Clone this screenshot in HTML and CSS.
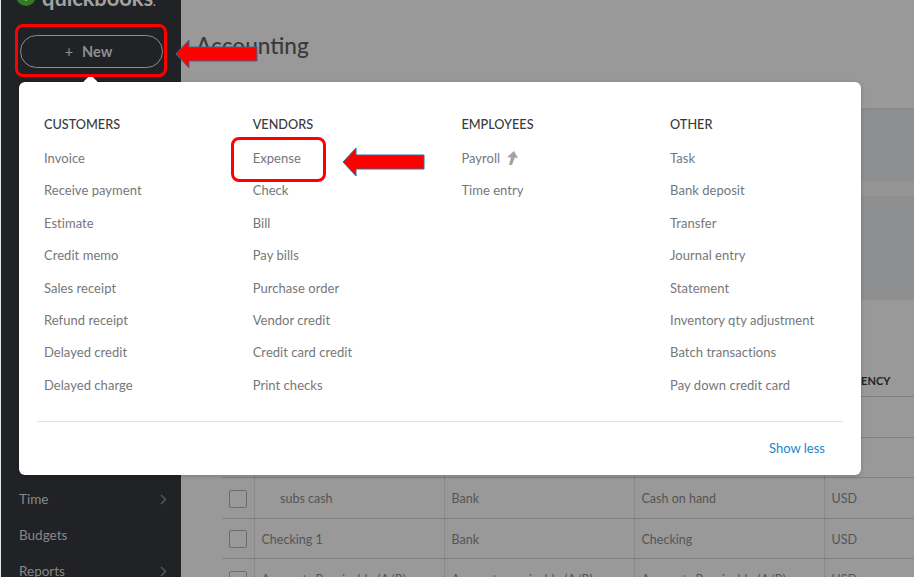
FILE: index.html
```html
<!DOCTYPE html>
<html lang="en">
<head>
<meta charset="utf-8">
<title>Accounting</title>
<link rel="stylesheet" href="styles.css">
</head>
<body>
<div class="app">
  <aside class="sidebar">
    <div class="logo">
      <svg class="logo-mark" width="20" height="20" viewBox="0 0 20 20"><circle cx="10" cy="10" r="10" fill="#2f7d1e"/><path d="M10 6v9" stroke="#9a9a9a" stroke-width="2"/></svg>
      <span class="logo-text">quickbooks<span class="logo-dot">.</span></span>
    </div>
    <button class="new-btn"><span class="plus">+</span><span>New</span></button>
    <nav class="side-nav">
      <div class="side-item"><span>Time</span><svg width="7" height="11" viewBox="0 0 7 11"><path d="M1 1l4.500 4.500L1 10" fill="none" stroke="#55565a" stroke-width="1.500"/></svg></div>
      <div class="side-item"><span>Budgets</span></div>
      <div class="side-item"><span>Reports</span><svg width="7" height="11" viewBox="0 0 7 11"><path d="M1 1l4.500 4.500L1 10" fill="none" stroke="#55565a" stroke-width="1.500"/></svg></div>
    </nav>
  </aside>
  <main class="main">
    <header class="page-head"><h1>Accounting</h1></header>
    <div class="band band-a"></div>
    <div class="band band-b"></div>
    <div class="band band-c"></div>
    <div class="table-wrap">
      <div class="row head-row"><div class="cell chk"></div><div class="cell"></div><div class="cell"></div><div class="cell"></div><div class="cell cur">CURRENCY</div></div>
      <div class="row"><div class="cell chk"></div><div class="cell"></div><div class="cell"></div><div class="cell"></div><div class="cell"></div></div>
      <div class="row"><div class="cell chk"></div><div class="cell"></div><div class="cell"></div><div class="cell"></div><div class="cell"></div></div>
      <div class="row"><div class="cell chk"><span class="box"></span></div><div class="cell sub">subs cash</div><div class="cell">Bank</div><div class="cell">Cash on hand</div><div class="cell">USD</div></div>
      <div class="row"><div class="cell chk"><span class="box"></span></div><div class="cell">Checking 1</div><div class="cell">Bank</div><div class="cell">Checking</div><div class="cell">USD</div></div>
      <div class="row"><div class="cell chk"><span class="box"></span></div><div class="cell">Accounts Receivable (A/R)</div><div class="cell">Accounts receivable (A/R)</div><div class="cell">Accounts Receivable (A/R)</div><div class="cell">USD</div></div>
    </div>
  </main>
</div>

<section class="popover">
  <span class="caret"></span>
  <div class="columns">
    <div class="col">
      <h2>CUSTOMERS</h2>
      <a>Invoice</a><a>Receive payment</a><a>Estimate</a><a>Credit memo</a><a>Sales receipt</a><a>Refund receipt</a><a>Delayed credit</a><a>Delayed charge</a>
    </div>
    <div class="col">
      <h2>VENDORS</h2>
      <a>Expense</a><a>Check</a><a>Bill</a><a>Pay bills</a><a>Purchase order</a><a>Vendor credit</a><a>Credit card credit</a><a>Print checks</a>
    </div>
    <div class="col">
      <h2>EMPLOYEES</h2>
      <a>Payroll <svg class="up" width="14" height="16" viewBox="0 0 14 16"><path d="M10 1L14 8L10.800 7.500L8 15H5L7 7.500L3 7z" fill="#a3a3a3"/></svg></a><a>Time entry</a>
    </div>
    <div class="col">
      <h2>OTHER</h2>
      <a>Task</a><a>Bank deposit</a><a>Transfer</a><a>Journal entry</a><a>Statement</a><a>Inventory qty adjustment</a><a>Batch transactions</a><a>Pay down credit card</a>
    </div>
  </div>
  <div class="foot"><a class="less">Show less</a></div>
</section>

<div class="mark mark-new"></div>
<div class="mark mark-expense"></div>
<svg class="arrow arrow-new" width="84" height="30" viewBox="0 0 84 30"><path d="M1 15L14 1V8H82V22H14V29Z" fill="#ff0000" stroke="#2f6f9f" stroke-width="1"/></svg>
<svg class="arrow arrow-expense" width="84" height="30" viewBox="0 0 84 30"><path d="M1 15L14 1V8H82V22H14V29Z" fill="#ff0000" stroke="#2f6f9f" stroke-width="1"/></svg>
</body>
</html>
```
FILE: styles.css
```css
* { box-sizing: border-box; }
html, body { margin: 0; height: 100%; overflow: hidden; }
body { font-family: "Lato", "Open Sans", sans-serif; background: #999; color: #3c3c3c; }

.app { display: flex; height: 577px; }

.sidebar { width: 181px; flex: none; background: #212225; border-left: 1px solid #e8e8e8; color: #8f9092; display: flex; flex-direction: column; overflow: hidden; }
.logo { height: 35px; display: flex; align-items: flex-start; gap: 6px; padding-left: 15px; margin-top: -14px; flex: none; }
.logo-mark { flex: none; }
.logo-text { font: 700 22px/26px "Lato", sans-serif; color: #a2a2a3; letter-spacing: -.1px; margin-top: -1px; }
.logo-dot { font-size: 11px; }
.new-btn { flex: none; margin: 14px 0 0 19px; width: 143px; height: 33px; border-radius: 17px; border: 1.500px solid #8d8d8d; background: #212225; color: #8f8f90; font: 700 14.500px "Lato", sans-serif; display: flex; align-items: center; justify-content: center; gap: 9px; padding: 0 6px 1px 0; }
.plus { font-weight: 400; }
.side-nav { margin-top: 413px; display: flex; flex-direction: column; }
.side-item { height: 36px; display: flex; align-items: center; justify-content: space-between; padding: 0 14px 0 18px; font-size: 13.500px; color: #87888a; flex: none; }

.main { flex: 1; min-width: 0; background: #999; display: flex; flex-direction: column; }
.page-head { height: 110px; flex: none; border-bottom: 2px solid #8b8b8b; padding: 32px 0 0 15px; }
.page-head h1 { margin: 0; font: 500 22.600px/28px "Lato", sans-serif; color: #3a3a3a; }
.band { flex: none; margin-left: 41px; }
.band-a { height: 72px; background: #8e8f91; }
.band-b { height: 14px; background: #959595; }
.band-c { height: 104px; background: #8e8f91; }

.table-wrap { margin: 60px 0 0 41px; flex: none; }
.row { display: grid; grid-template-columns: 33px 190px 190px 190px 1fr; height: 40.500px; border-bottom: 1px solid #808080; font-size: 12.500px; color: #555; flex: none; }
.head-row { height: 37px; font-weight: 700; font-size: 11px; color: #1f1f1f; }
.cell { display: flex; align-items: center; padding: 2px 0 0 6.500px; border-right: 1px dotted #7c7c7c; white-space: nowrap; overflow: hidden; min-width: 0; }
.chk { padding-left: 7px; }
.cell:last-child { border-right: 0; padding-left: 6.500px; }
.cell.sub { padding-left: 25px; }
.cell.cur { color: #1f1f1f; padding-top: 4px; }
.box { width: 18px; height: 18px; border: 1px solid #6c6c6c; border-radius: 2px; display: block; }

.popover { position: absolute; left: 19px; top: 82px; width: 842px; height: 393px; background: #fff; border-radius: 6px; box-shadow: 0 1px 4px rgba(0,0,0,.2); padding: 0 18px 0 18px; display: flex; flex-direction: column; }
.caret { position: absolute; left: 66px; top: -5px; width: 11px; height: 11px; background: #fff; transform: rotate(45deg); border-radius: 2px; }
.columns { display: grid; grid-template-columns: 208.700px 208.700px 208.700px 1fr; padding: 33px 0 0 7px; height: 339px; }
.col { display: flex; flex-direction: column; align-items: flex-start; }
.col h2 { margin: 0; height: 19px; font: 500 12.700px/19px "Lato", sans-serif; color: #393a3d; }
.col a { height: 32.430px; font-size: 13px; line-height: 20px; letter-spacing: .04px; color: #76777b; display: flex; align-items: center; gap: 2px; white-space: nowrap; flex: none; }
.col h2 + a { margin-top: 7.700px; }
.up { margin-left: 2px; }
.foot { border-top: 1px solid #e1e1e1; display: flex; justify-content: flex-end; padding: 16px 18px 0 0; }
.less { font-size: 13px; line-height: 20px; color: #1b87c9; }

.mark { position: absolute; border: 3px solid #f00; border-radius: 8px; }
.mark-new { left: 15px; top: 24px; width: 152px; height: 53px; }
.mark-expense { left: 231px; top: 137px; width: 95px; height: 45px; }
.arrow { position: absolute; }
.arrow-new { left: 175px; top: 39px; }
.arrow-expense { left: 342px; top: 147px; }
```
